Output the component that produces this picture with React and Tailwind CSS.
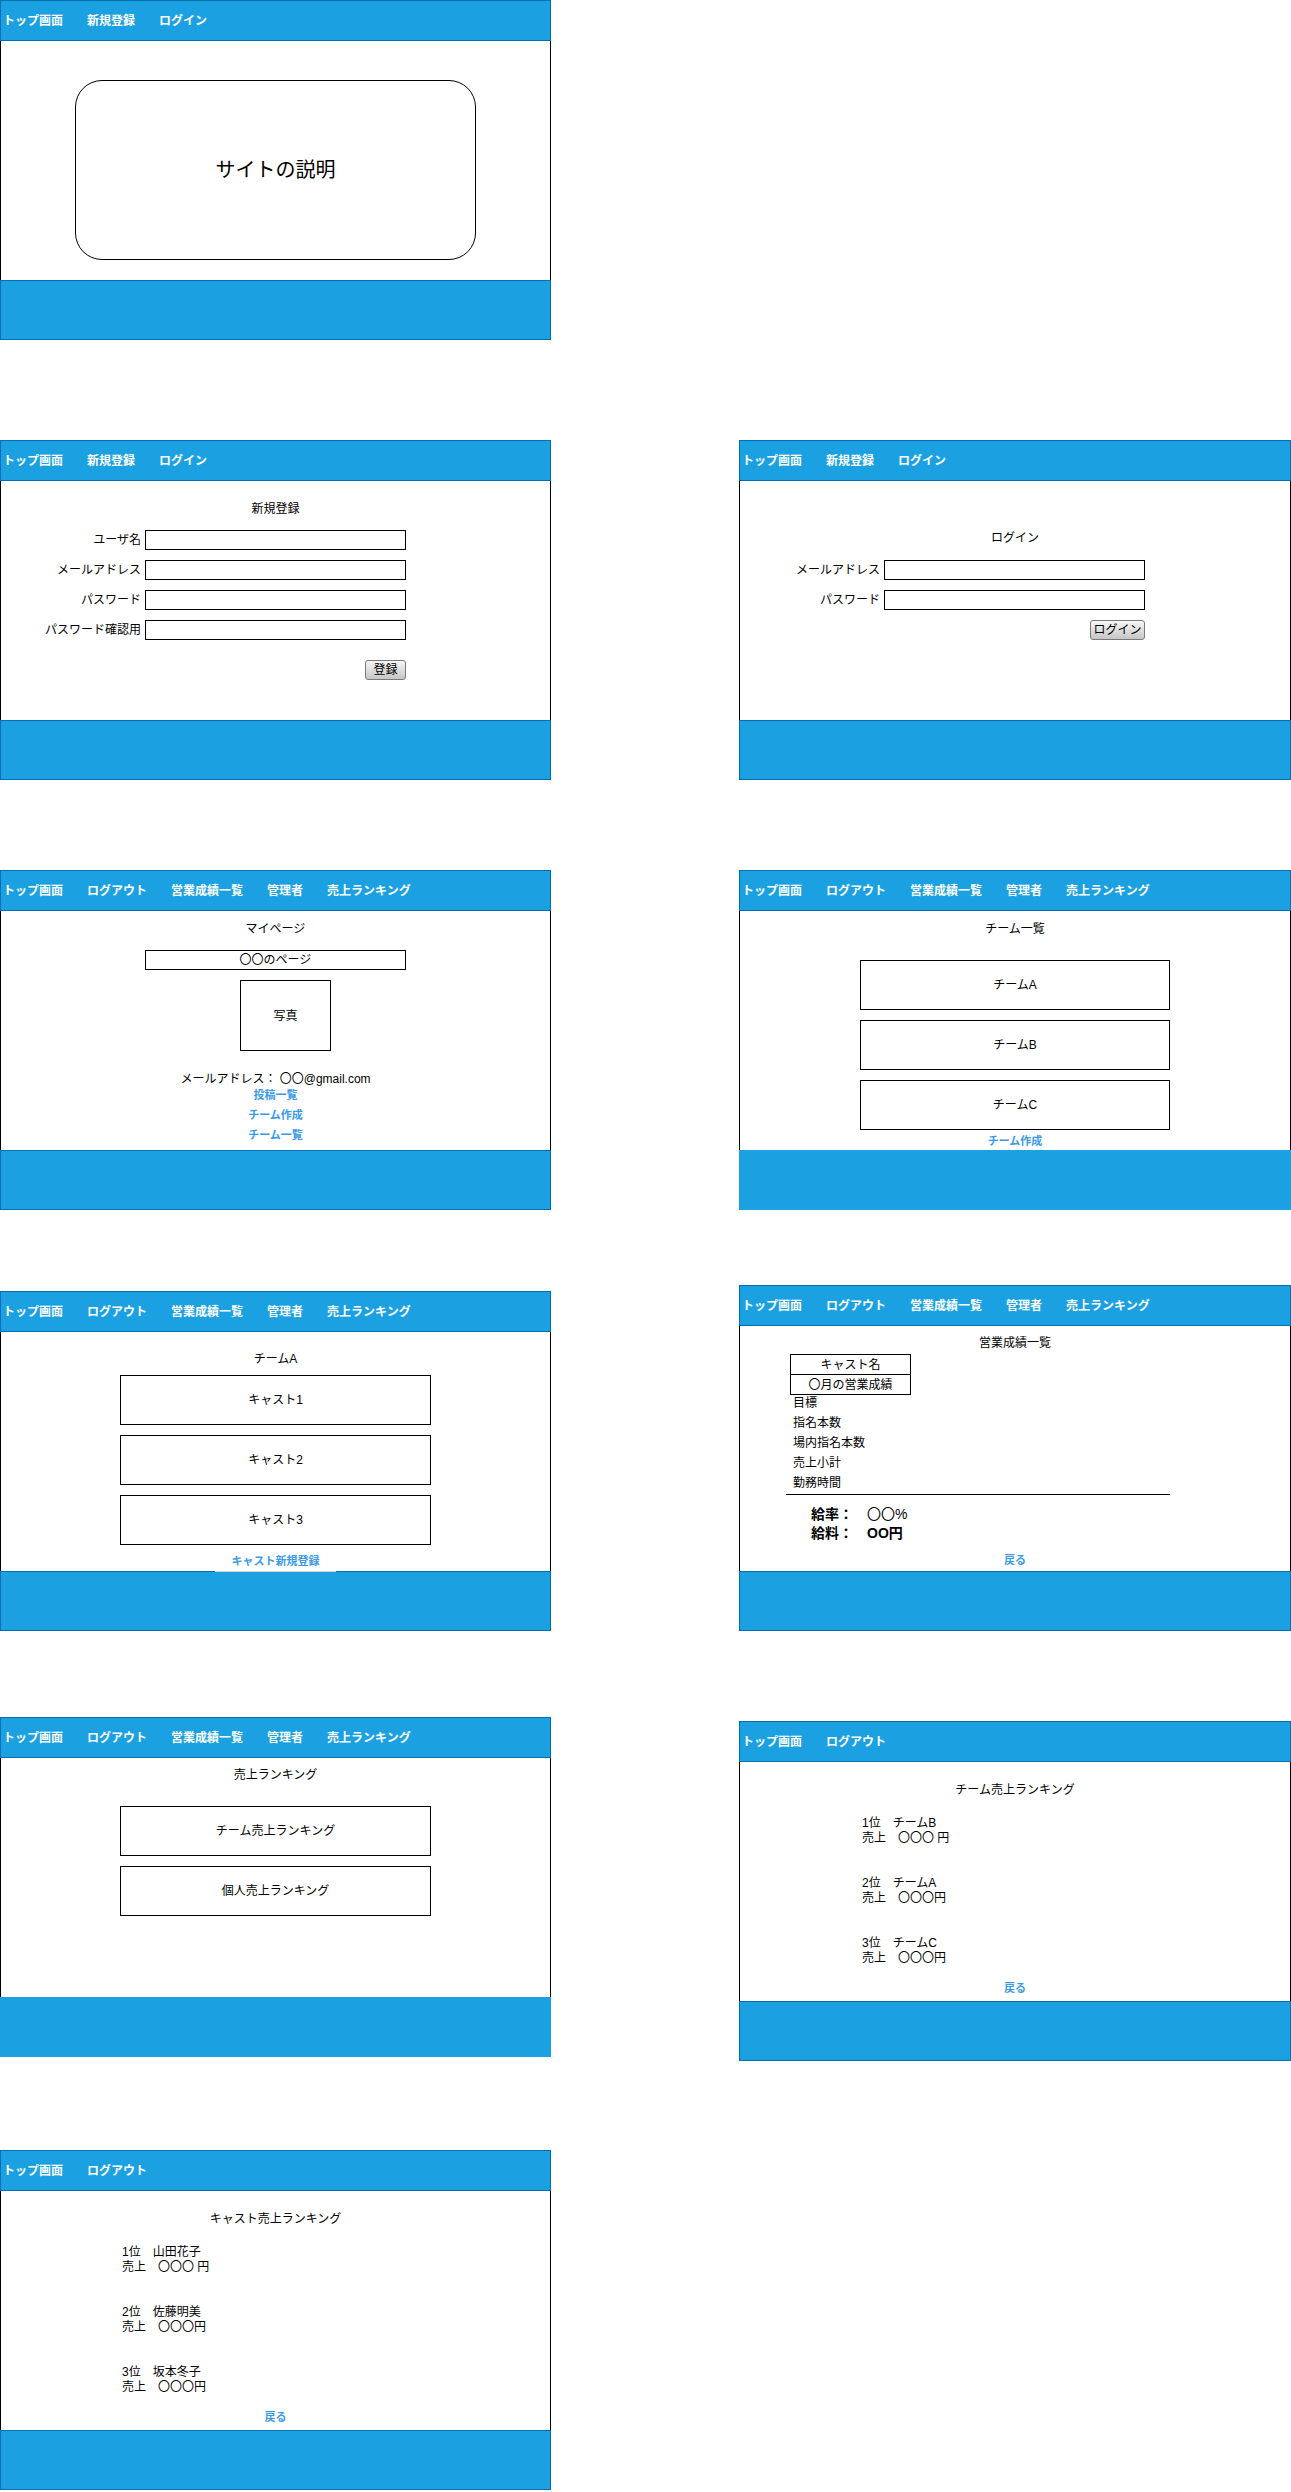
import React from "react";
import clsx from "clsx";

const NAV_GUEST = ["トップ画面", "新規登録", "ログイン"];
const NAV_MEMBER = ["トップ画面", "ログアウト", "営業成績一覧", "管理者", "売上ランキング"];
const NAV_SHORT = ["トップ画面", "ログアウト"];

// 画面ひとつ分の枠（ヘッダー・本文・フッター）
const Frame = ({ nav, right = false, bodyH = "h-[239px]", footerBorder = true, className, children }) => (
  <div className={clsx(right ? "w-[552px]" : "w-[551px]", "shrink-0", className)}>
    <div className="h-[41px] bg-[#1ba1e2] border border-[#006eaf] flex items-center gap-6 pl-[2px] text-white text-[12px] font-bold">
      {nav.map((n) => (
        <span key={n}>{n}</span>
      ))}
    </div>
    <div className={clsx(bodyH, "border-x border-black bg-white")}>{children}</div>
    <div
      className={clsx(
        "h-[60px] bg-[#1ba1e2]",
        footerBorder && "border border-[#006eaf]"
      )}
    />
  </div>
);

const Title = ({ className, children }) => (
  <p className={clsx("text-center text-[12px] leading-[16px]", className)}>{children}</p>
);

const LinkText = ({ className, children }) => (
  <a className={clsx("block text-center text-[11px] leading-[16px] font-bold text-[#3b99ea]", className)}>
    {children}
  </a>
);

const Box = ({ className, children }) => (
  <div className={clsx("border border-black flex items-center justify-center text-[12px]", className)}>
    {children}
  </div>
);

const Field = ({ label }) => (
  <div className="flex items-center h-[20px]">
    <span className="w-[144px] pr-[4px] text-right text-[12px] leading-[16px]">{label}</span>
    <input readOnly className="w-[261px] h-[20px] border border-black bg-white outline-none" />
  </div>
);

const GrayButton = ({ className, children }) => (
  <button className={clsx("h-[20px] rounded-[3px] border border-[#7a7a7a] bg-linear-to-b from-[#f7f7f7] to-[#c6c6c6] text-[12px] leading-none text-black", className)}>
    {children}
  </button>
);

const RankList = ({ items, className }) => (
  <div className={clsx("flex flex-col gap-[30px] text-[12px] leading-[15px]", className)}>
    {items.map((it) => (
      <div key={it.rank}>
        <p>
          {it.rank}　{it.name}
        </p>
        <p>売上　{it.sales}</p>
      </div>
    ))}
  </div>
);

export default function App() {
  return (
    <div className="w-[1291px] h-[2492px] overflow-hidden bg-white text-black font-['Liberation_Sans','Noto_Sans_CJK_JP',sans-serif]">
      {/* トップ画面 */}
      <div className="flex items-start">
        <Frame nav={NAV_GUEST}>
          <div className="pt-[39px]">
            <div className="ml-[74px] w-[401px] h-[180px] rounded-[27px] border border-black flex items-center justify-center text-[20px]">
              サイトの説明
            </div>
          </div>
        </Frame>
      </div>

      {/* 新規登録 / ログイン */}
      <div className="mt-[100px] flex items-start gap-[188px]">
        <Frame nav={NAV_GUEST}>
          <div className="pt-[20px]">
            <Title>新規登録</Title>
            <div className="mt-[13px] flex flex-col gap-[10px]">
              <Field label="ユーザ名" />
              <Field label="メールアドレス" />
              <Field label="パスワード" />
              <Field label="パスワード確認用" />
            </div>
            <GrayButton className="mt-[20px] ml-[364px] w-[41px]">登録</GrayButton>
          </div>
        </Frame>
        <Frame nav={NAV_GUEST} right>
          <div className="pt-[49px]">
            <Title>ログイン</Title>
            <div className="mt-[14px] flex flex-col gap-[10px]">
              <Field label="メールアドレス" />
              <Field label="パスワード" />
            </div>
            <GrayButton className="mt-[10px] ml-[350px] w-[55px]">ログイン</GrayButton>
          </div>
        </Frame>
      </div>

      {/* マイページ / チーム一覧 */}
      <div className="mt-[90px] flex items-start gap-[188px]">
        <Frame nav={NAV_MEMBER}>
          <div className="pt-[10px] flex flex-col items-center">
            <Title>マイページ</Title>
            <Box className="mt-[13px] w-[261px] h-[20px]">〇〇のページ</Box>
            <Box className="mt-[10px] self-start ml-[239px] w-[91px] h-[71px]">写真</Box>
            <p className="mt-[20px] text-[12px] leading-[16px]">メールアドレス： 〇〇@gmail.com</p>
            <div className="flex flex-col gap-[4px]">
              <LinkText>投稿一覧</LinkText>
              <LinkText>チーム作成</LinkText>
              <LinkText>チーム一覧</LinkText>
            </div>
          </div>
        </Frame>
        <Frame nav={NAV_MEMBER} right footerBorder={false}>
          <div className="pt-[10px] flex flex-col items-center">
            <Title>チーム一覧</Title>
            <div className="mt-[23px] flex flex-col gap-[10px]">
              <Box className="w-[310px] h-[50px]">チームA</Box>
              <Box className="w-[310px] h-[50px]">チームB</Box>
              <Box className="w-[310px] h-[50px]">チームC</Box>
            </div>
            <LinkText className="mt-[3px]">チーム作成</LinkText>
          </div>
        </Frame>
      </div>

      {/* チーム詳細 / 営業成績一覧 */}
      <div className="mt-[75px] flex items-start gap-[188px]">
        <Frame nav={NAV_MEMBER} className="mt-[6px]">
          <div className="pt-[19px] flex flex-col items-center">
            <Title>チームA</Title>
            <div className="mt-[8px] flex flex-col gap-[10px]">
              <Box className="w-[311px] h-[50px]">キャスト1</Box>
              <Box className="w-[311px] h-[50px]">キャスト2</Box>
              <Box className="w-[311px] h-[50px]">キャスト3</Box>
            </div>
            {/* リンクの枠がフッターの上端に少し重なっている */}
            <div className="relative z-10 mt-[8px] w-[121px] h-[19px] border-b border-[#d4d8dc]">
              <LinkText>キャスト新規登録</LinkText>
            </div>
          </div>
        </Frame>
        <Frame nav={NAV_MEMBER} right bodyH="h-[245px]">
          <div className="pt-[9px] text-[12px]">
            <Title>営業成績一覧</Title>
            <div className="mt-[3px] ml-[50px] w-[121px] border border-black">
              <div className="h-[20px] border-b border-black flex items-center justify-center">キャスト名</div>
              <div className="h-[19px] flex items-center justify-center">〇月の営業成績</div>
            </div>
            <div className="ml-[53px] flex flex-col gap-[4px] leading-[16px]">
              <p>目標</p>
              <p>指名本数</p>
              <p>場内指名本数</p>
              <p>売上小計</p>
              <p>勤務時間</p>
            </div>
            <div className="mt-[3px] ml-[46px] w-[384px] h-px bg-black" />
            <div className="mt-[10px] ml-[71px] text-[14px] leading-[19px] font-bold">
              <p className="flex">
                <span className="w-[56px]">給率：</span>
                <span className="font-normal">〇〇%</span>
              </p>
              <p className="flex">
                <span className="w-[56px]">給料：</span>
                <span>OO円</span>
              </p>
            </div>
            <LinkText className="mt-[9px]">戻る</LinkText>
          </div>
        </Frame>
      </div>

      {/* 売上ランキング / チーム売上ランキング */}
      <div className="mt-[86px] flex items-start gap-[188px]">
        <Frame nav={NAV_MEMBER} footerBorder={false}>
          <div className="pt-[9px] flex flex-col items-center">
            <Title>売上ランキング</Title>
            <div className="mt-[23px] flex flex-col gap-[10px]">
              <Box className="w-[311px] h-[50px]">チーム売上ランキング</Box>
              <Box className="w-[311px] h-[50px]">個人売上ランキング</Box>
            </div>
          </div>
        </Frame>
        <Frame nav={NAV_SHORT} right className="mt-[4px]">
          <div className="pt-[20px]">
            <Title>チーム売上ランキング</Title>
            <RankList
              className="mt-[18px] ml-[122px]"
              items={[
                { rank: "1位", name: "チームB", sales: "〇〇〇 円" },
                { rank: "2位", name: "チームA", sales: "〇〇〇円" },
                { rank: "3位", name: "チームC", sales: "〇〇〇円" },
              ]}
            />
            <LinkText className="mt-[14px]">戻る</LinkText>
          </div>
        </Frame>
      </div>

      {/* キャスト売上ランキング */}
      <div className="mt-[89px] flex items-start">
        <Frame nav={NAV_SHORT}>
          <div className="pt-[20px]">
            <Title>キャスト売上ランキング</Title>
            <RankList
              className="mt-[18px] ml-[121px]"
              items={[
                { rank: "1位", name: "山田花子", sales: "〇〇〇 円" },
                { rank: "2位", name: "佐藤明美", sales: "〇〇〇円" },
                { rank: "3位", name: "坂本冬子", sales: "〇〇〇円" },
              ]}
            />
            <LinkText className="mt-[14px]">戻る</LinkText>
          </div>
        </Frame>
      </div>
    </div>
  );
}
